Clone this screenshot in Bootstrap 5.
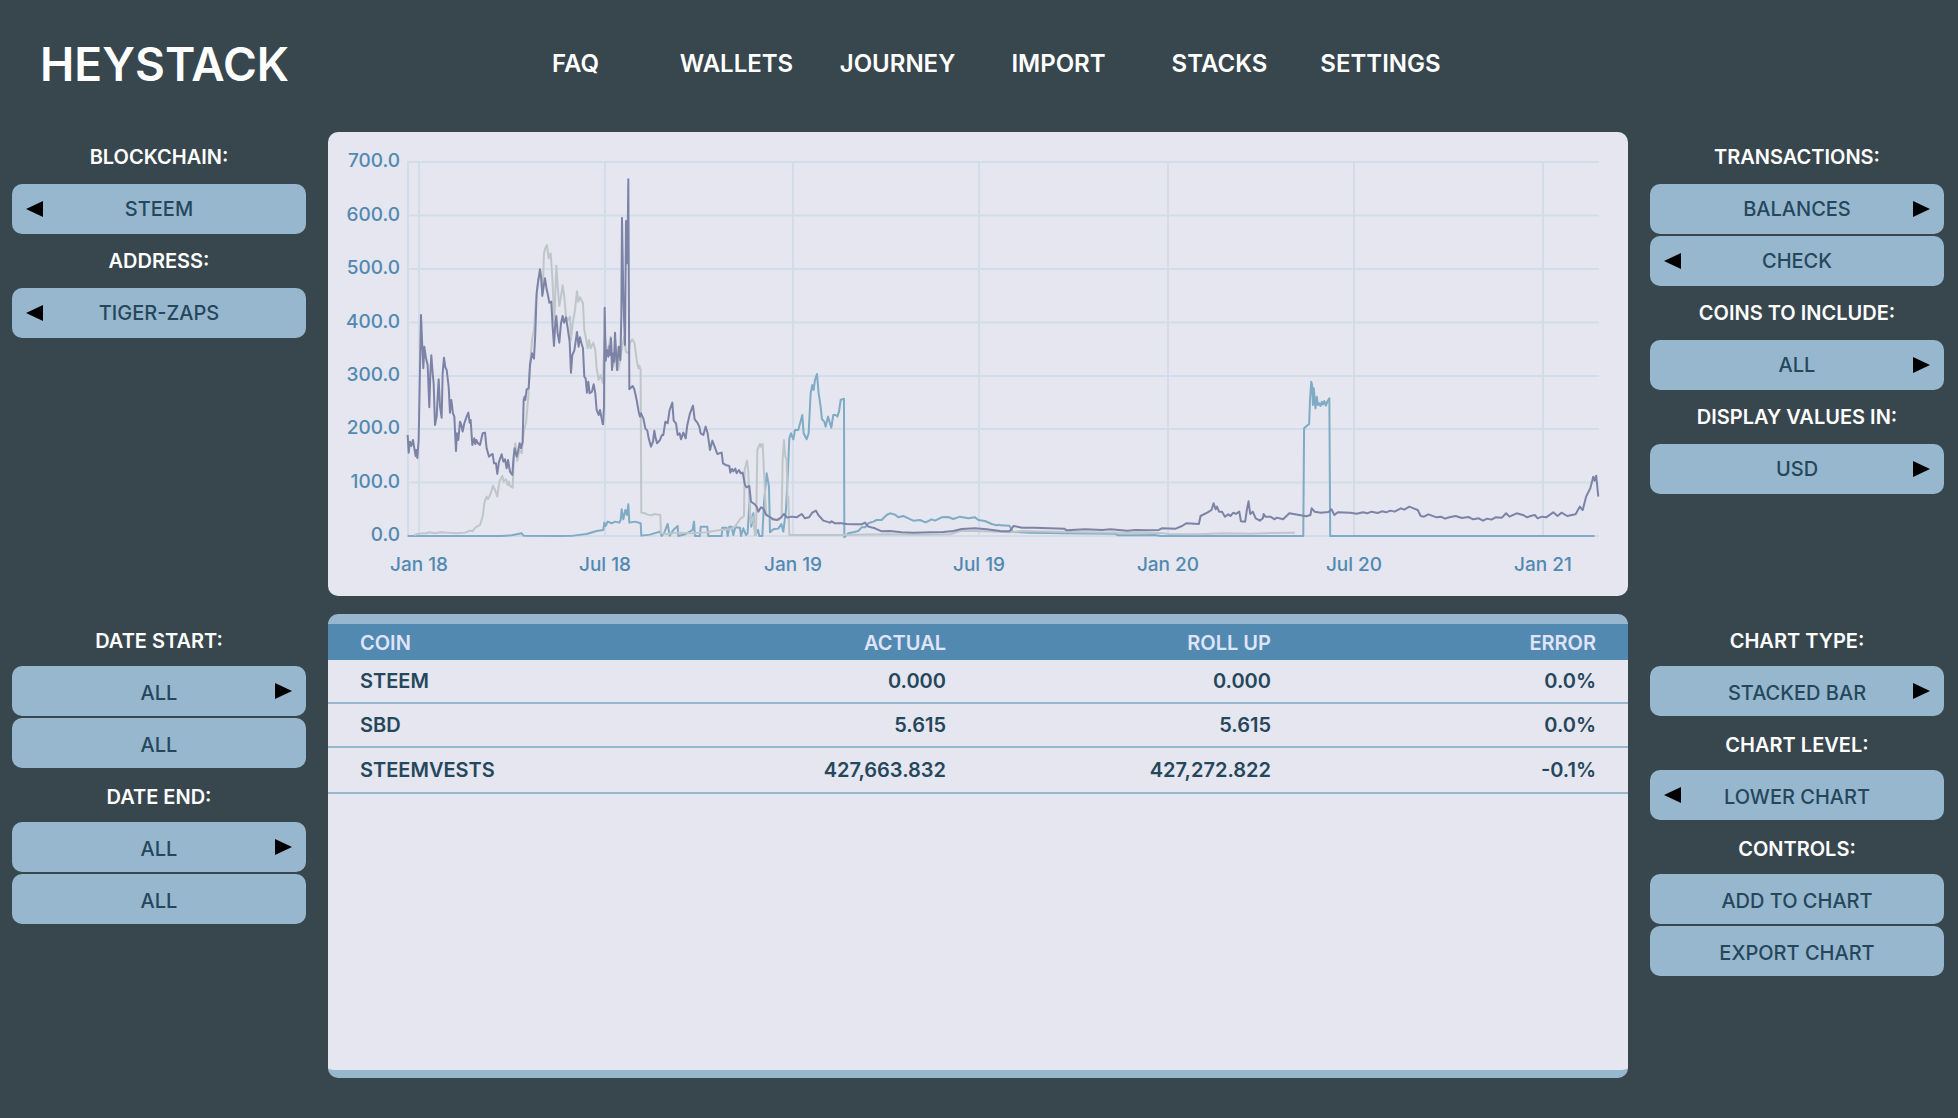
<!DOCTYPE html>
<html lang="en">
<head>
<meta charset="utf-8">
<meta name="viewport" content="width=device-width, initial-scale=1">
<title>Heystack</title>
<link href="https://cdn.jsdelivr.net/npm/bootstrap@5.3.0/dist/css/bootstrap.min.css" rel="stylesheet">
<style>
  :root { --slate:#38464e; --sky:#97b7ce; --ocean:#5189b1; --mist:#e5e6ef; --ink:#25475c; }
  body { background:var(--slate); color:#fff; font-family:Inter,"Liberation Sans",sans-serif; font-size:20px; line-height:24px; }
  .topbar { height:132px; padding:0 40px 4px; }
  .brand { font-size:46px; line-height:58px; font-weight:600; color:#fff; text-decoration:none; flex:0 0 455px; }
  .topbar .nav { flex:0 1 966px; }
  .topbar .nav-link { color:#fff; font-size:24px; line-height:30px; font-weight:600; padding:0; }
  .board { padding:0 14px 38px 12px; gap:18px; }
  .band { gap:22px; }
  .side { flex:0 0 294px; gap:2px; }
  .side-label { height:50px; font-size:20px; font-weight:600; margin:0; }
  .pill { height:50px; border:0; border-radius:10px; background:var(--sky); color:var(--ink); font-size:20px; line-height:24px; font-weight:500; padding:0; position:relative; }
  .pill:hover { background:#a6c3d7; }
  .low .side-label, .low .pill { padding-top:4px; }
  .tip { position:absolute; top:17px; width:17px; height:16px; }
  .tip-l { left:14px; } .tip-r { right:14px; }
  .panel { min-height:464px; border-radius:10px; background:var(--mist); overflow:hidden; }
  .panel svg { display:block; width:100%; height:auto; }
  .axis { font-size:19px; font-weight:500; fill:var(--ocean); }
  .series polyline { fill:none; stroke-width:2; stroke-linejoin:round; vector-effect:non-scaling-stroke; }
  .ledger { border-top:10px solid var(--sky); border-bottom:8px solid var(--sky); }
  .coins { width:100%; table-layout:fixed; border-collapse:separate; border-spacing:0; color:var(--ink); font-weight:600; }
  .coins th, .coins td { padding:0 32px; height:44px; border-bottom:2px solid var(--sky); font-weight:600; }
  .coins thead th { height:36px; background:var(--ocean); color:#e0e4f8; border:0; padding-top:2px; }
  .coins tbody tr:last-child > * { height:46px; }
</style>
</head>
<body>
<header class="topbar d-flex align-items-center">
  <a class="brand" href="#">HEYSTACK</a>
  <nav class="nav nav-justified flex-nowrap text-center">
    <a class="nav-link" href="#">FAQ</a>
    <a class="nav-link" href="#">WALLETS</a>
    <a class="nav-link" href="#">JOURNEY</a>
    <a class="nav-link" href="#">IMPORT</a>
    <a class="nav-link" href="#">STACKS</a>
    <a class="nav-link" href="#">SETTINGS</a>
  </nav>
</header>

<svg class="d-none" aria-hidden="true">
  <symbol id="left" viewBox="0 0 17 16"><path d="M17 0V16L0 8z"/></symbol>
  <symbol id="right" viewBox="0 0 17 16"><path d="M0 0V16L17 8z"/></symbol>
</svg>

<main class="board d-flex flex-column">
  <div class="band d-flex">
    <aside class="side d-flex flex-column">
      <h2 class="side-label d-flex align-items-center justify-content-center">BLOCKCHAIN:</h2>
      <button type="button" class="pill"><svg class="tip tip-l"><use href="#left"/></svg>STEEM</button>
      <h2 class="side-label d-flex align-items-center justify-content-center">ADDRESS:</h2>
      <button type="button" class="pill"><svg class="tip tip-l"><use href="#left"/></svg>TIGER-ZAPS</button>
    </aside>

    <section class="panel flex-fill">
      <svg viewBox="0 0 1300 464" role="img" aria-label="Balances by coin">
        <g stroke="#d2dde9" stroke-width="2">
          <path fill="none" d="M79 30H1271M79 83.5H1271M79 137H1271M79 190.500H1271M79 244H1271M79 297H1271M79 350.500H1271M79 404H1271"/>
          <path fill="none" d="M80 30V404M91 30V404M277 30V404M465 30V404M651 30V404M840 30V404M1026 30V404M1215 30V404"/>
        </g>
        <g class="axis" text-anchor="end">
          <text x="72" y="35">700.0</text><text x="72" y="89">600.0</text><text x="72" y="142">500.0</text><text x="72" y="196">400.0</text>
          <text x="72" y="249">300.0</text><text x="72" y="302">200.0</text><text x="72" y="356">100.0</text><text x="72" y="409">0.0</text>
        </g>
        <g class="axis" text-anchor="middle">
          <text x="91" y="439">Jan 18</text><text x="277" y="439">Jul 18</text><text x="465" y="439">Jan 19</text><text x="651" y="439">Jul 19</text>
          <text x="840" y="439">Jan 20</text><text x="1026" y="439">Jul 20</text><text x="1215" y="439">Jan 21</text>
        </g>
        <!-- steem -->
        <g class="series" stroke="#7fabc5">
          <polyline transform="translate(-8,-12) scale(.3333)" points="263,1248 540,1248 575,1246 605,1240 611,1247 720,1248"/>
          <polyline transform="translate(232,18) scale(.3333)" points="0,1158 40,1157 80,1152 110,1143 130,1140 133,1118 137,1128 143,1115 155,1120 165,1115 178,1118 182,1110 185,1078 190,1108 196,1080 201,1095 205,1063 208,1118 225,1115 242,1120 244,1157 270,1154 300,1145 305,1158 312,1150 323,1122 329,1157 340,1140 353,1128 355,1158 375,1153 398,1140 402,1115 405,1158 420,1158 422,1130 442,1130 445,1158 485,1158 487,1133 500,1133 503,1158 508,1130 515,1130 520,1155 526,1132 540,1133 543,1158 550,1135 558,1155 563,1150 568,1060 574,1130 580,1090 586,1155 594,1140 598,1158 607,1158 612,1060 620,970 627,1010 630,1147 640,1138 655,1136 664,1122 670,1145 678,1080 684,960 688,865 693,850 700,868 705,840 715,840 727,795 731,850 740,868 746,850 752,730 757,705 761,720 765,690 771,672 776,730 782,770 786,808 793,815 797,830 804,800 810,820 814,833 820,795 828,795"/>
          <polyline transform="translate(392,208) scale(.3333)" points="348,225 352,230 357,215 362,180 372,176 373,592 385,580 400,577 415,573 425,562 435,562 445,550 460,545 470,540 485,540 500,525 510,520 525,524 535,532 550,528 565,535 580,542 600,540 617,547 635,538 645,542 665,532 685,531 700,537 720,530 745,535 765,532 775,540 795,543 815,552 830,556 840,554"/>
          <polyline transform="translate(652,228) scale(.4209,.3333)" points="47,496 70,497 78,516 120,518 200,520 320,521 328,526 380,526 415,525 430,528 470,528 768,528 770,205 776,198 782,192 784,120 787,65 789,75 791,135 793,85 797,145 800,110 803,135 806,130 809,138 812,125 815,134 818,123 822,137 825,125 830,115 832,528 1460,528"/>
        </g>
        <!-- sbd -->
        <g class="series" stroke="#bfc6ca">
          <polyline transform="translate(-8,-12) scale(.3333)" points="283,1246 295,1241 320,1240 326,1237 345,1240 362,1237 380,1238 410,1240 435,1238 450,1232 457,1234 467,1222 480,1215 488,1190 494,1145 500,1130 504,1137 508,1130 515,1112 519,1097 526,1112 532,1130 538,1085 547,1068 551,1085 558,1078 563,1095 567,1085 570,1098 578,1103 582,1010 586,970 592,1023 598,990 605,1000 611,935 618,910 625,830 630,740 636,660 642,630 648,540 655,480 660,460 668,520 672,400 677,382 681,375 686,415 692,400 697,470 703,610 709,437 714,510 718,558 723,530 728,496 733,530 738,590 744,600 750,590 753,660 758,610 765,570 771,514 775,545 780,532 789,550 793,630 798,655 803,685 807,660 812,685 820,668 826,690 830,745 836,780 842,765 849,790 852,700 855,650 860,690 866,680 872,650 880,740 887,700 895,750 905,690 912,650 918,695 926,700 930,670 937,658 944,670 950,720 955,745 958,737 962,750 964,1180"/>
          <polyline transform="translate(232,18) scale(.3333)" points="244,1088 255,1090 262,1094 275,1096 283,1092 301,1095 303,1150 320,1152 350,1148 400,1150 440,1147 475,1141 510,1138 525,1130 540,1108 552,1098 554,960 561,932 565,965 568,1060 572,1120 580,1100 585,1155 588,1155 592,900 600,882 603,890 608,882 613,985 618,1090 635,1108 655,1110 665,1100 668,930 672,870 676,920 680,930 683,1060 685,1040 688,1155 840,1155"/>
          <polyline transform="translate(392,208) scale(.3333)" points="360,585 500,583 600,584 690,583 720,573 760,573 840,575"/>
          <polyline transform="translate(652,228) scale(.4209,.3333)" points="47,515 70,517 100,513 200,516 330,518 430,519 450,522 520,523 580,520 640,521 700,519 748,518"/>
        </g>
        <!-- steem vests -->
        <g class="series" stroke="#7c83a7">
          <polyline transform="translate(-8,-12) scale(.3333)" points="263,945 266,998 270,965 274,978 279,960 283,985 287,1008 289,990 292,1014 296,960 299,800 303,585 306,660 310,745 313,680 318,715 323,735 328,862 331,760 334,706 338,760 341,790 345,915 350,890 353,830 356,778 360,860 365,893 368,760 372,713 376,742 380,750 386,800 390,878 394,840 399,880 403,890 408,993 411,940 415,960 420,905 424,915 428,935 433,910 440,890 445,878 449,908 452,900 457,975 463,955 466,972 469,960 474,970 480,975 488,940 495,938 500,985 507,1010 513,1005 518,1002 522,1030 528,1030 532,1062 537,1025 545,1003 550,1025 555,1018 560,1045 564,1020 570,1055 577,1065 581,1010 584,985 590,1010 594,995 599,970 603,985 608,965 611,840 614,830 616,840 620,808 626,805 630,735 636,700 642,716 646,640 650,520 655,480 660,448 664,475 667,528 671,500 675,475 680,508 684,525 688,548 694,545 698,620 702,678 706,610 709,588 713,640 718,668 723,610 728,588 732,608 738,592 744,630 749,665 753,758 757,705 763,692 767,665 771,636 776,680 780,652 785,672 789,685 793,770 797,775 801,818 805,785 809,820 816,815 821,793 826,820 830,870 836,885 840,870 849,915"/>
          <polyline transform="translate(232,18) scale(.3333)" points="129,825 132,770 134,473 137,632 141,600 145,620 149,588 151,615 153,565 156,660 160,610 162,635 165,548 171,660 176,590 181,630 184,500 186,204 190,440 195,585 198,213 202,340 205,88 208,718 218,708 223,718 230,750 236,785 240,800 243,790 250,805 256,835 262,842 266,865 273,890 279,875 283,842 287,865 291,880 300,870 306,855 310,855 316,815 323,820 329,780 337,758 341,812 348,820 353,855 359,850 363,868 370,848 377,865 382,825 390,790 399,767 404,808 412,818 418,830 422,850 430,855 437,830 443,850 450,900 457,872 464,890 472,912 485,908 489,940 497,945 508,948 511,968 516,957 520,964 526,956 530,970 537,960 542,970 548,968 555,1005 560,1012 568,1008 573,1055 583,1062 590,1070 595,1085 603,1072 610,1075 618,1095 628,1100 640,1108 652,1110 663,1103 672,1092 682,1103 695,1100 710,1102 725,1092 735,1105 747,1102 757,1088 768,1082 775,1095 790,1112 810,1118 815,1114 825,1120 840,1120"/>
          <polyline transform="translate(392,208) scale(.3333)" points="358,549 380,552 400,553 425,553 435,548 445,560 465,565 485,574 510,573 545,577 580,578 630,577 670,576 700,573 725,567 765,565 800,568 840,573"/>
          <polyline transform="translate(652,228) scale(.4209,.3333)" points="47,514 70,514 80,498 100,503 130,503 200,506 206,511 250,508 290,510 310,508 350,512 370,510 400,511 425,510 432,505 465,506 480,498 490,490 520,492 524,468 540,458 550,450 555,430 560,448 563,440 568,455 575,455 582,470 590,463 595,468 602,458 608,462 616,455 620,484 630,485 634,450 638,424 642,462 648,455 655,475 665,482 672,475 674,462 678,470 690,470 700,478 705,473 720,478 735,460 755,464 775,469 785,465 788,445 795,455 810,458 828,456 835,448 842,465 850,457 880,458 895,461 910,457 920,460 930,455 945,459 955,454 965,457 975,452 985,455 1000,445 1008,449 1020,440 1030,445 1040,450 1047,468 1055,470 1065,463 1085,472 1095,470 1105,476 1115,472 1130,468 1145,474 1160,471 1172,478 1185,475 1195,482 1205,476 1215,479 1225,472 1240,473 1250,460 1258,470 1275,460 1290,465 1300,472 1308,468 1318,465 1325,475 1335,470 1345,472 1362,457 1372,468 1382,458 1395,468 1415,463 1425,440 1432,450 1440,410 1450,385 1457,350 1460,362 1464,347 1469,410"/>
        </g>
      </svg>
    </section>

    <aside class="side d-flex flex-column">
      <h2 class="side-label d-flex align-items-center justify-content-center">TRANSACTIONS:</h2>
      <button type="button" class="pill">BALANCES<svg class="tip tip-r"><use href="#right"/></svg></button>
      <button type="button" class="pill"><svg class="tip tip-l"><use href="#left"/></svg>CHECK</button>
      <h2 class="side-label d-flex align-items-center justify-content-center">COINS TO INCLUDE:</h2>
      <button type="button" class="pill">ALL<svg class="tip tip-r"><use href="#right"/></svg></button>
      <h2 class="side-label d-flex align-items-center justify-content-center">DISPLAY VALUES IN:</h2>
      <button type="button" class="pill">USD<svg class="tip tip-r"><use href="#right"/></svg></button>
    </aside>
  </div>

  <div class="band low d-flex">
    <aside class="side d-flex flex-column">
      <h2 class="side-label d-flex align-items-center justify-content-center">DATE START:</h2>
      <button type="button" class="pill">ALL<svg class="tip tip-r"><use href="#right"/></svg></button>
      <button type="button" class="pill">ALL</button>
      <h2 class="side-label d-flex align-items-center justify-content-center">DATE END:</h2>
      <button type="button" class="pill">ALL<svg class="tip tip-r"><use href="#right"/></svg></button>
      <button type="button" class="pill">ALL</button>
    </aside>

    <section class="panel ledger flex-fill">
      <table class="coins">
        <thead>
          <tr><th scope="col">COIN</th><th scope="col" class="text-end">ACTUAL</th><th scope="col" class="text-end">ROLL UP</th><th scope="col" class="text-end">ERROR</th></tr>
        </thead>
        <tbody>
          <tr><th scope="row">STEEM</th><td class="text-end">0.000</td><td class="text-end">0.000</td><td class="text-end">0.0%</td></tr>
          <tr><th scope="row">SBD</th><td class="text-end">5.615</td><td class="text-end">5.615</td><td class="text-end">0.0%</td></tr>
          <tr><th scope="row">STEEMVESTS</th><td class="text-end">427,663.832</td><td class="text-end">427,272.822</td><td class="text-end">-0.1%</td></tr>
        </tbody>
      </table>
    </section>

    <aside class="side d-flex flex-column">
      <h2 class="side-label d-flex align-items-center justify-content-center">CHART TYPE:</h2>
      <button type="button" class="pill">STACKED BAR<svg class="tip tip-r"><use href="#right"/></svg></button>
      <h2 class="side-label d-flex align-items-center justify-content-center">CHART LEVEL:</h2>
      <button type="button" class="pill"><svg class="tip tip-l"><use href="#left"/></svg>LOWER CHART</button>
      <h2 class="side-label d-flex align-items-center justify-content-center">CONTROLS:</h2>
      <button type="button" class="pill">ADD TO CHART</button>
      <button type="button" class="pill">EXPORT CHART</button>
    </aside>
  </div>
</main>
<script src="https://cdn.jsdelivr.net/npm/bootstrap@5.3.0/dist/js/bootstrap.bundle.min.js"></script>
</body>
</html>
